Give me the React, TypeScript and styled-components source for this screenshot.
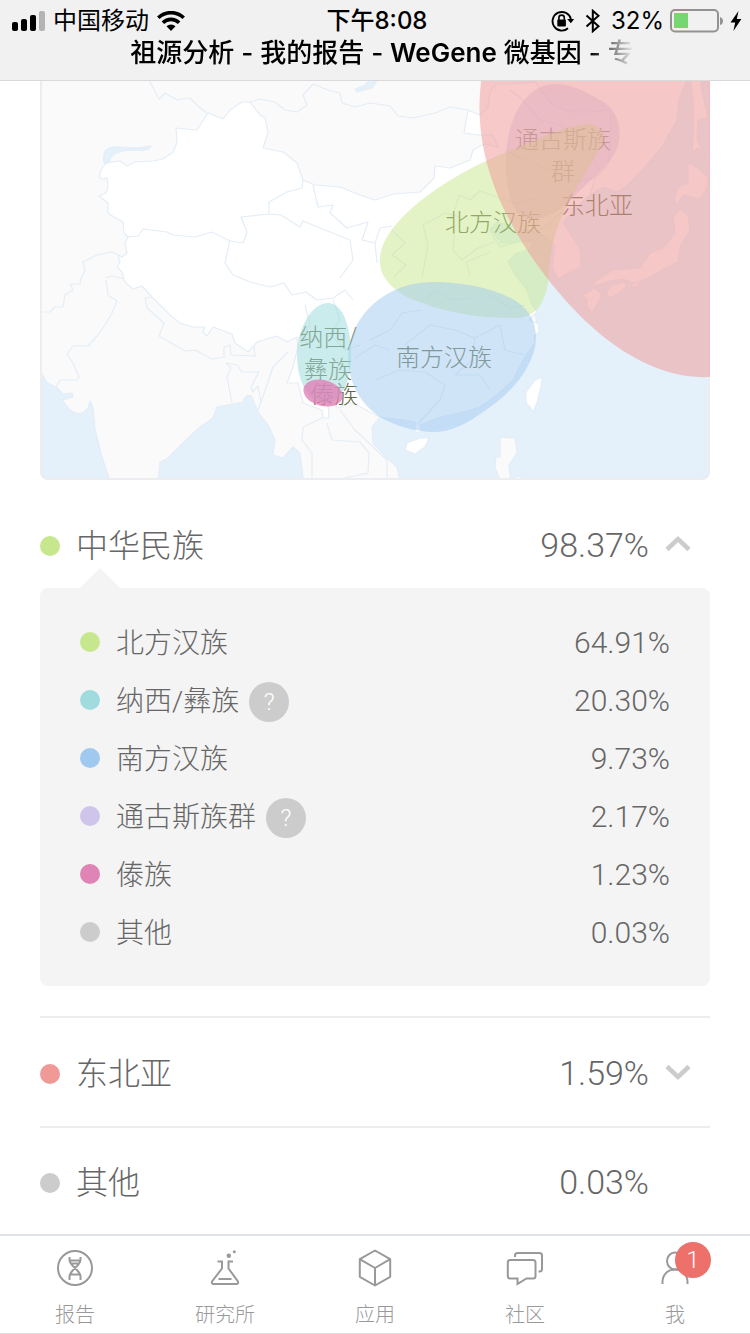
import React, { useState } from "react";
import styled, { createGlobalStyle } from "styled-components";

const CJK = '"Noto Sans CJK SC", sans-serif';

const GlobalStyle = createGlobalStyle`
  *, *::before, *::after { box-sizing: border-box; }
  body {
    margin: 0;
    background: #fff;
    color: #666;
    font-family: Roboto, ${CJK};
    font-weight: 300;
  }
  button { font: inherit; color: inherit; background: none; border: 0; padding: 0; cursor: pointer; }
`;

const Page = styled.div`
  display: flex;
  flex-direction: column;
  min-height: 100vh;
`;

/* ---------- header ---------- */

const Header = styled.header`
  height: 81px;
  background: #f1f1f1;
  border-bottom: 1px solid #d9d9db;
  color: #000;
  font-family: Inter, ${CJK};
`;

const StatusBar = styled.div`
  display: grid;
  grid-template-columns: 1fr auto 1fr;
  align-items: center;
  height: 38px;
  padding: 4px 8px 0 12px;
  font-size: 24px;
  font-weight: 400;
  line-height: 34px;
`;

const StatusGroup = styled.div<{ $end?: boolean; $gap: number }>`
  display: flex;
  align-items: center;
  justify-content: ${(p) => (p.$end ? "flex-end" : "flex-start")};
  gap: ${(p) => p.$gap}px;
`;

const Time = styled.span`
  font-weight: 500;
`;

const Title = styled.h1`
  width: fit-content;
  max-width: 100%;
  margin: 0 auto;
  padding-left: 14px;
  white-space: nowrap;
  font-size: 26px;
  font-weight: 500;
  line-height: 30px;
  mask-image: linear-gradient(90deg, #000 calc(100% - 44px), transparent);
`;

const Brand = styled.span`
  font-weight: 600;
`;

/* ---------- content ---------- */

const Main = styled.main`
  flex: 1;
  padding: 0 40px;
`;

const MapCard = styled.figure`
  margin: 0 0 22px;
  border-radius: 0 0 8px 8px;
  overflow: hidden;
  svg { display: block; width: 100%; height: auto; }
`;

const MapLabel = styled.text`
  font-family: ${CJK};
  font-size: 24px;
  font-weight: 300;
  fill: #5f6640;
  text-anchor: middle;
`;

const Group = styled.section<{ $divided?: boolean }>`
  border-top: ${(p) => (p.$divided ? "2px solid #ededed" : "0")};
  &:last-child > button { height: 106px; }
`;

const GroupRow = styled.button<{ $open?: boolean }>`
  display: flex;
  align-items: center;
  width: 100%;
  height: ${(p) => (p.$open ? 86 : 108)}px;
  padding: ${(p) => (p.$open ? 2 : 4)}px 19px 0 0;
  text-align: left;
`;

const Dot = styled.span<{ $color: string }>`
  flex: none;
  width: 20px;
  height: 20px;
  margin-right: 16px;
  border-radius: 50%;
  background: ${(p) => p.$color};
`;

const GroupName = styled.span`
  flex: 1;
  font-size: 32px;
  line-height: 48px;
`;

const GroupValue = styled.span`
  padding-bottom: 2px;
  font-size: 34px;
  line-height: 48px;
`;

const Chevron = styled.svg<{ $open?: boolean }>`
  width: 26px;
  height: 18px;
  margin: 0 0 4px 16px;
  transform: ${(p) => (p.$open ? "none" : "rotate(180deg)")};
`;

const Panel = styled.ul`
  position: relative;
  margin: 0 0 30px;
  padding: 25px 40px;
  list-style: none;
  background: #f4f4f4;
  border-radius: 8px;
  &::before {
    content: "";
    position: absolute;
    top: -20px;
    left: 40px;
    border: 20px solid transparent;
    border-top: 0;
    border-bottom-color: #f4f4f4;
  }
`;

const Item = styled.li`
  display: flex;
  align-items: center;
  height: 58px;
`;

const ItemName = styled.span`
  padding-top: 4px;
  font-size: 28px;
  line-height: 40px;
`;

const ItemValue = styled.span`
  margin-left: auto;
  padding-top: 2px;
  font-size: 30px;
  line-height: 40px;
`;

const Help = styled.button`
  width: 40px;
  height: 40px;
  margin: 4px 0 0 10px;
  border-radius: 50%;
  background: #ccc;
  color: #fff;
  font-size: 24px;
  line-height: 40px;
  text-align: center;
`;

/* ---------- tab bar ---------- */

const TabBar = styled.nav`
  display: flex;
  height: 100px;
  background: #fff;
  border-top: 2px solid #dfe3e7;
  border-bottom: 1px solid #e0e0e0;
`;

const Tab = styled.a`
  flex: 1;
  display: flex;
  flex-direction: column;
  align-items: center;
  padding-top: 12px;
  color: #999;
  font-size: 20px;
  line-height: 28px;
  text-decoration: none;
`;

const TabIcon = styled.span`
  position: relative;
  width: 40px;
  height: 40px;
  margin-bottom: 13px;
  svg { display: block; width: 40px; height: 40px; }
`;

const Badge = styled.span`
  position: absolute;
  top: -6px;
  left: 20px;
  width: 36px;
  height: 36px;
  border-radius: 50%;
  background: #ed706b;
  color: #fff;
  font-size: 24px;
  line-height: 36px;
  text-align: center;
`;

/* ---------- drawings ---------- */

const SignalIcon = () => (
  <svg width="33" height="20" viewBox="0 0 33 20" aria-hidden="true">
    <rect x="0" y="11" width="6" height="9" rx="2" />
    <rect x="9" y="8" width="6" height="12" rx="2" />
    <rect x="18" y="4" width="6" height="16" rx="2" />
    <rect x="27" y="0" width="6" height="20" rx="2" fill="#b4b4b4" />
  </svg>
);

const WifiIcon = () => (
  <svg width="28" height="20" viewBox="0 0 28 20" aria-hidden="true">
    <g fill="none" stroke="#000" strokeWidth="3.6">
      <path d="M1.3 6.8a18.2 18.2 0 0 1 25.4 0" />
      <path d="M5.9 11.7a11.6 11.6 0 0 1 16.2 0" />
    </g>
    <path d="M9.5 15.3a6.4 6.4 0 0 1 9 0L14 20z" />
  </svg>
);

const LockIcon = () => (
  <svg width="24" height="22" viewBox="0 0 24 22" aria-hidden="true">
    <path d="M17 18.3A9.3 9.3 0 1 1 19.9 9" fill="none" stroke="#000" strokeWidth="1.9" />
    <path d="M16.2 9h7l-3.4 4.3z" />
    <rect x="6.3" y="9.6" width="8.6" height="6.8" rx="1" />
    <path d="M7.9 10V7.8a2.7 2.7 0 0 1 5.4 0V10" fill="none" stroke="#000" strokeWidth="1.6" />
  </svg>
);

const BluetoothIcon = () => (
  <svg width="16" height="24" viewBox="0 0 16 24" aria-hidden="true">
    <path d="M1.5 6.5l12 10.7-5.7 5V1.8l5.7 5-12 10.7" fill="none" stroke="#000" strokeWidth="2" />
  </svg>
);

const BatteryIcon = () => (
  <svg width="54" height="24" viewBox="0 0 54 24" aria-hidden="true">
    <rect x="1" y="1" width="47" height="21.5" rx="4" fill="none" stroke="#929292" strokeWidth="2" />
    <rect x="4" y="4" width="14" height="15" fill="#76d672" />
    <path d="M50 8q3 1 3 4t-3 4z" fill="#929292" />
  </svg>
);

const BoltIcon = () => (
  <svg width="12" height="20" viewBox="0 0 12 20" aria-hidden="true">
    <path d="M8.5 0L.5 11.5h4.7L3.4 20l8-12H6.8z" />
  </svg>
);

const line = { fill: "none", stroke: "#999", strokeWidth: 2 } as const;

const DnaIcon = () => (
  <svg viewBox="0 0 40 40" aria-hidden="true">
    <circle cx="20" cy="20" r="17" {...line} />
    <path
      d="M14.5 9v2.5c0 7 11 10.500 11 17V32M25.5 9v2.5c0 7-11 10.500-11 17V32M15 12.500h10M16.500 15.500h7M15 26.500h10"
      {...line}
    />
  </svg>
);

const FlaskIcon = () => (
  <svg viewBox="0 0 40 40" aria-hidden="true">
    <path d="M12.5 13.5H17v7L7.2 33.2q-1.2 2.8 1.6 2.8h22.4q2.8 0 1.6-2.8L23.5 20.5v-7H28" {...line} />
    <path d="M13.5 31h13" {...line} />
    <circle cx="23.8" cy="7.8" r="2.2" fill="#999" />
    <circle cx="29.3" cy="3.8" r="1.5" fill="#999" />
  </svg>
);

const BoxIcon = () => (
  <svg viewBox="0 0 40 40" aria-hidden="true">
    <path d="M20 2.5l15.2 8.7v17.6L20 37.5 4.8 28.8V11.2zM4.8 11.2L20 20l15.2-8.8M20 20v17.5" strokeLinejoin="round" {...line} />
  </svg>
);

const ChatIcon = () => (
  <svg viewBox="0 0 40 40" aria-hidden="true">
    <path d="M5 12h23q2.5 0 2.5 2.5V28q0 2.5-2.5 2.5h-6.5L12.5 36v-5.500H5Q2.800 30.500 2.800 28V14.500Q2.800 12 5 12z" {...line} />
    <path d="M10 9V7.5Q10 5 12.5 5h22q2.5 0 2.5 2.5V21q0 2.500-2.500 2.500h-1" {...line} />
  </svg>
);

const PersonIcon = () => (
  <svg viewBox="0 0 40 40" aria-hidden="true">
    <ellipse cx="20" cy="13" rx="8" ry="8.5" {...line} />
    <path d="M7.5 36v-2c0-7 5-12.500 12.500-12.500S32.500 27 32.500 34v2" {...line} />
  </svg>
);

const SEA = "#e4f0fa";
const BORDER = "#e4edf6";

const EastAsiaMap = () => (
  <svg viewBox="40 81 670 399" role="img" aria-label="祖源分布地图">
    <rect x="40" y="80" width="670" height="400" fill={SEA} />
    <g stroke={BORDER} strokeWidth="1.2" strokeLinejoin="round">
      <path
        fill="#fafafa"
        d="M36 76H686L687 80 679 100 677 120 662 147 647 165 630 183 617 192 603 187 590 195 577 207 563 223 570 233 580 250 581 267 570 272 558 279 552 267 555 247 547 237 535 232 524 229 514 234 510 225 497 222 490 229 502 243 533 241 508 262 527 290 535 312 538 332 523 360 513 380 497 395 480 407 440 417 403 420 380 417 372 427 373 443 387 458 397 467 401 484H303L303 478 300 453 293 447 283 458 273 455 275 440 268 425 258 412 253 400C252 394 246 393 243 402L217 407 213 418 200 427 183 443 168 458 160 462 158 484H111L102 457 95 430 93 407 90 401 88 408Q80 418 70 410L62 400 73 397 72 393 63 394 56 387 47 383 42 374 36 372Z"
      />
      <path
        fill="#fff"
        d="M106 163L102 168 99 177 103 179 107 178 108 187 106 193 99 196 108 203 108 213 114 217 123 222 124 233 128 237 125 243 127 253 122 257 118 255 120 262 117 267 122 272 124 280 127 284 133 289 142 286 152 297 160 305 170 315 180 323 193 327 205 327 203 332 207 336 213 327 232 334 235 343 248 352 257 342 270 338 277 336 287 342 297 337 298 347 293 367 287 383 298 383 303 403 322 410 323 418 329 418 328 403 340 408 347 403 357 405 370 412 380 417 403 420 415 422 415 432 421 432 420 425 440 417 460 413 480 407 497 395 513 380 523 360 535 342 534 336 539 332 538 324 529 320 537 312 531 303 527 290 515 275 508 262 515 254 530 249 533 241 518 242 500 247 494 238 490 229 497 222 510 225 514 234 524 229 535 232 547 225 560 213 577 207 590 195 595 178 608 165 611 133 610 110 590 112 570 112 553 105 543 93 535 82 510 84 496 84 490 92 488 107 480 115 468 110 464 133 478 135 493 135 498 147 484 144 473 150 470 160 450 168 435 166 434 178 420 192 393 194 375 200 360 195 340 187 315 185 303 180 297 163 283 152 263 148 268 133 265 118 260 115 250 102 242 102 230 110 223 119 208 113 197 130 176 128 177 143 173 152 163 159 153 161 135 162 127 166 120 161Z"
      />
      <path
        fill="#fafafa"
        d="M688 163L698 168 708 177 708 187 700 199 683 195 677 205 674 200 677 188 688 183ZM680 209L688 215 690 230 680 247 678 262 667 267 657 273 647 279 634 283 623 279 610 281 595 286 594 282 613 270 640 268 650 253 663 248 675 233 673 217ZM607 292L612 285 625 282 626 288 613 297 607 297ZM632 284L642 280 638 286 631 288ZM582 295L595 288 602 295 596 306 592 313 587 307 587 299ZM690 76L693 100 693 137 692 152 698 148 705 155 697 140 698 120 708 118 702 90 700 76ZM500 437L515 438 517 453 509 465 511 484H501L495 467 496 457 500 457ZM511 478L520 476 528 481H511Z"
      />
      <path
        fill="#fff"
        d="M535 380L542 377 541 387 537 403 533 412 530 407 526 403 526 392ZM407 443L420 438 429 438 425 447 415 454 405 450Z"
      />
      <path
        fill={SEA}
        d="M104 162C102 150 108 146 120 147L137 148 151 146C150 150 145 151 135 150 118 150 111 154 109 162L106 164ZM355 89L365 85 372 78H379L372 88 357 92Z"
      />
    </g>
    <g fill="none" stroke={BORDER} strokeWidth="1.2" strokeLinejoin="round">
      <path d="M250 102L260 99 275 102 285 110 297 112 307 105 303 95 313 84 328 90 340 93 342 103 355 107 370 103 390 106 398 116 413 118 435 113 450 107 468 110" />
      <path d="M149 80L159 99 165 93 177 100 190 98 200 108 207 113M118 255L112 252 97 255 83 262 85 270 81 279 80 284 70 284 73 290 65 295 63 307 55 307 50 312 42 312M105 278L112 276 124 279" />
      <path d="M106 280L108 295 117 301 112 313 107 322 98 335 88 346 73 346 67 354 73 363 79 377 77 380 60 380 56 387" />
      <path d="M152 297L145 298 147 308 164 323 159 336 185 351 195 350 212 359 224 357 224 347 230 345 231 355 255 356 254 347M232 403L227 377 231 368 226 363 237 365 242 372 259 372 251 387 253 392 258 386 261 402 257 412M261 402L267 385 273 367 288 352" />
      <path d="M128 237L138 236 143 229 167 232 173 235 195 237 212 232 230 241 243 243 247 232 241 217 268 214 281 215 300 227 303 221 330 232 350 240 353 260 340 278M269 213V202L287 192 302 188 303 180M313 185L318 207 333 205 330 213 347 228 368 222 362 240 375 243 377 263 M375 243L380 228 392 226" />
      <path d="M230 240L225 263 233 275 250 282 270 287 284 283 292 295 306 292 317 300 333 298 345 290 353 300 M298 340L310 325 305 305M333 300L340 320 331 335 345 350 360 345" />
      <path d="M303 427L302 440 312 453 312 484M303 427L322 418M327 423L332 440 360 442 369 453 368 473 345 478M340 410L355 430 387 460 387 484" />
      <path d="M392 230L405 243 392 255 406 265 394 277M423 225L428 245 422 278M423 225L445 213 460 217M455 210L459 195 470 200 480 191 494 196 515 203 538 198M455 225L453 250 462 260 478 248 494 242M470 275L466 262 490 252M425 300L436 290 452 300 470 298M490 295L510 308 525 305M370 340L390 330 402 313 422 310M405 345L430 325 455 330 475 338 472 360 455 375M355 358L375 345 390 350 M375 380L400 370 425 372 445 385 440 400 417 425M455 375L480 375 490 390M475 338L500 325 505 350 525 355M510 90L520 97 540 120 560 125 585 140 600 170M505 150L525 160 550 170 575 182 595 178" />
    </g>
    <path d="M41 78V471a8 8 0 0 0 8 8H701a8 8 0 0 0 8-8V78" fill="none" stroke="#ebedf0" strokeWidth="2" />
    <MapLabel x="563" y="148">通古斯族</MapLabel>
    <MapLabel x="563" y="180">群</MapLabel>
    <MapLabel x="597" y="214">东北亚</MapLabel>
    <MapLabel x="493" y="231">北方汉族</MapLabel>
    <MapLabel x="444" y="366">南方汉族</MapLabel>
    <MapLabel x="328" y="346">纳西/</MapLabel>
    <MapLabel x="328" y="378">彝族</MapLabel>
    <MapLabel x="334" y="403">傣族</MapLabel>
    <path fill="#cfc4ea" fillOpacity=".5" d="M553 84C572 83 588 93 602 101 619 112 623 130 617 149 609 167 587 183 567 203 549 220 520 230 511 200 503 172 504 140 515 115 523 98 536 85 553 84Z" />
    <path fill="#c7e78e" fillOpacity=".5" d="M380 262C378 222 450 175 500 155 540 138 570 124 588 124 602 125 606 134 601 145 590 172 552 212 549 270 548 300 538 315 520 318 470 319 433 309 405 296 388 286 380 274 380 262Z" />
    <path fill="#9fc9ef" fillOpacity=".5" d="M433 282C462 282 495 288 516 301 534 313 538 330 535 347 529 374 506 398 480 414 463 426 448 432 433 432 413 431 396 426 380 417 359 403 348 380 348 357 350 315 386 282 433 282Z" />
    <path fill="#9edcdc" fillOpacity=".55" d="M328 303C344 303 351 330 351 355 351 380 342 403 326 403 307 403 297 379 297 355 297 330 311 303 328 303Z" />
    <ellipse cx="323" cy="393" rx="20" ry="13" transform="rotate(15 323 393)" fill="#e07fb5" fillOpacity=".78" />
    <path fill="#ef9a97" fillOpacity=".52" d="M482 76C474 125 484 185 527 250 580 330 645 380 710 377V76Z" />
  </svg>
);

/* ---------- data ---------- */

type Part = { name: string; value: string; color: string; help?: boolean };
type Ancestry = { name: string; value: string; color: string; parts?: Part[]; expandable?: boolean };

const ancestries: Ancestry[] = [
  {
    name: "中华民族",
    value: "98.37%",
    color: "#c7e78e",
    expandable: true,
    parts: [
      { name: "北方汉族", value: "64.91%", color: "#c7e78e" },
      { name: "纳西/彝族", value: "20.30%", color: "#a0dbdf", help: true },
      { name: "南方汉族", value: "9.73%", color: "#9fc9ef" },
      { name: "通古斯族群", value: "2.17%", color: "#cfc4ea", help: true },
      { name: "傣族", value: "1.23%", color: "#e084b6" },
      { name: "其他", value: "0.03%", color: "#ccc" },
    ],
  },
  { name: "东北亚", value: "1.59%", color: "#ef9a97", expandable: true },
  { name: "其他", value: "0.03%", color: "#ccc" },
];

const tabs = [
  { label: "报告", icon: <DnaIcon /> },
  { label: "研究所", icon: <FlaskIcon /> },
  { label: "应用", icon: <BoxIcon /> },
  { label: "社区", icon: <ChatIcon /> },
  { label: "我", icon: <PersonIcon />, badge: 1 },
];

const AncestryGroup = ({ data, divided }: { data: Ancestry; divided: boolean }) => {
  const [open, setOpen] = useState(Boolean(data.parts));
  const shown = open && Boolean(data.parts);
  return (
    <Group $divided={divided}>
      <GroupRow type="button" $open={shown} aria-expanded={data.expandable ? open : undefined} onClick={() => setOpen(!open)}>
        <Dot $color={data.color} />
        <GroupName>{data.name}</GroupName>
        <GroupValue>{data.value}</GroupValue>
        <Chevron $open={open} viewBox="0 0 26 18" aria-hidden="true">
          {data.expandable && <path d="M2 14.500L13 4 24 14.500" fill="none" stroke="#ccc" strokeWidth="4.5" />}
        </Chevron>
      </GroupRow>
      {shown && (
        <Panel>
          {data.parts!.map((part) => (
            <Item key={part.name}>
              <Dot $color={part.color} />
              <ItemName>{part.name}</ItemName>
              {part.help && <Help type="button" aria-label={`${part.name}说明`}>?</Help>}
              <ItemValue>{part.value}</ItemValue>
            </Item>
          ))}
        </Panel>
      )}
    </Group>
  );
};

export default function App() {
  return (
    <Page>
      <GlobalStyle />
      <Header>
        <StatusBar>
          <StatusGroup $gap={8}>
            <SignalIcon />
            <span>中国移动</span>
            <WifiIcon />
          </StatusGroup>
          <Time>下午8:08</Time>
          <StatusGroup $end $gap={6}>
            <StatusGroup $gap={10}>
              <LockIcon />
              <BluetoothIcon />
              <span>32%</span>
            </StatusGroup>
            <BatteryIcon />
            <BoltIcon />
          </StatusGroup>
        </StatusBar>
        <Title>
          祖源分析 - 我的报告 - <Brand>WeGene</Brand> 微基因 - 专
        </Title>
      </Header>
      <Main>
        <MapCard>
          <EastAsiaMap />
        </MapCard>
        {ancestries.map((a, i) => (
          <AncestryGroup key={a.name + i} data={a} divided={i > 0} />
        ))}
      </Main>
      <TabBar>
        {tabs.map((t) => (
          <Tab key={t.label} href="#">
            <TabIcon>
              {t.icon}
              {t.badge && <Badge>{t.badge}</Badge>}
            </TabIcon>
            {t.label}
          </Tab>
        ))}
      </TabBar>
    </Page>
  );
}
